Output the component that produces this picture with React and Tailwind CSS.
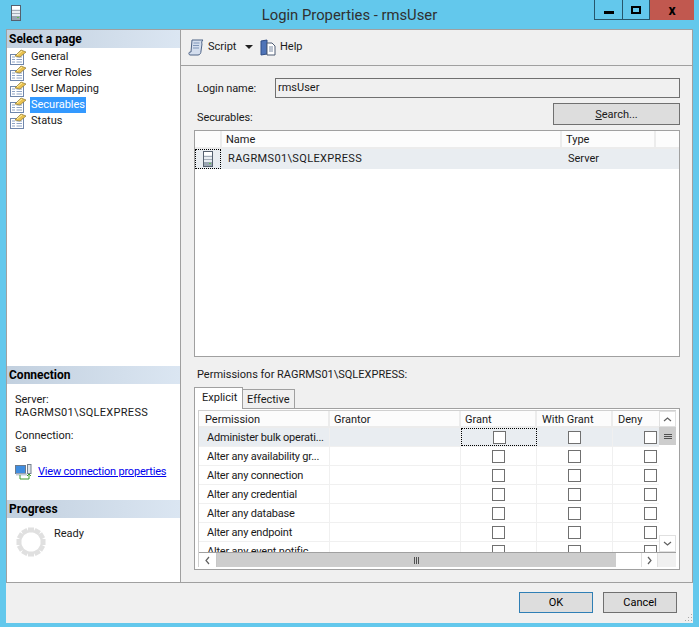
const PAGES = ["General", "Server Roles", "User Mapping", "Securables", "Status"];
const PERMISSIONS = [
  "Administer bulk operati...",
  "Alter any availability gr...",
  "Alter any connection",
  "Alter any credential",
  "Alter any database",
  "Alter any endpoint",
  "Alter any event notific...",
];

function PageIcon() {
  return (
    <svg width="17" height="16" viewBox="0 0 17 16" className="shrink-0">
      <rect x="0.5" y="5.5" width="13" height="10" fill="#fff" stroke="#6f86ab" />
      <path d="M2 8h3M2 10.5h3M2 13h3M6.5 8h5.5M6.5 10.5h5.5M6.5 13h5.5" stroke="#8ea3c4" />
      <path d="M5 7 L11 1 L16 3 L10 8 Z" fill="#e9c14f" stroke="#8f7a35" strokeWidth="0.7" />
      <path d="M7 6 L12 2" stroke="#fff1ad" />
    </svg>
  );
}

function ServerIcon({ className }) {
  return (
    <svg width="10" height="16" viewBox="0 0 10 16" className={className}>
      <rect x="0.5" y="0.5" width="9" height="15" fill="#e8edf2" stroke="#55606e" />
      <rect x="1" y="1" width="8" height="3" fill="#fff" />
      <path d="M1 5.5h8M1 8.5h8" stroke="#a4adb8" />
      <rect x="1" y="11" width="8" height="4" fill="#9aa6b2" />
      <rect x="6" y="12" width="2" height="1" fill="#5fc04f" />
    </svg>
  );
}

function ScriptIcon() {
  return (
    <svg width="17" height="17" viewBox="0 0 17 17" className="shrink-0">
      <path d="M4 1h11c-1.5 1-1.5 3-1 4l-1 7c0 2-1 4-3 4H2c-1.5 0-1.5-3 0-3h1z" fill="#d4deee" stroke="#4f6487" />
      <path d="M5.5 4h6M5 6.5h6M5 9h6" stroke="#7f95b8" />
    </svg>
  );
}

function HelpIcon() {
  return (
    <svg width="17" height="17" viewBox="0 0 17 17" className="shrink-0">
      <path d="M1 2 L7 1 L7 15 L1 16 Z" fill="#4f74b8" stroke="#2f4d86" />
      <path d="M7 4h5l3 3v9H7z" fill="#fff" stroke="#4d5b73" />
      <path d="M9 8h4M9 10h4M9 12h4" stroke="#7a8aa3" />
    </svg>
  );
}

function ConnectionIcon() {
  return (
    <svg width="17" height="16" viewBox="0 0 17 16" className="shrink-0">
      <rect x="0.5" y="1.5" width="10" height="8" fill="#3f8de0" stroke="#6c7a8c" />
      <rect x="1" y="9.5" width="11" height="2" fill="#c3ccd6" />
      <rect x="12.5" y="0.5" width="3.5" height="9" fill="#dfe5ea" stroke="#77828f" />
      <path d="M5 11v4h9v-4" fill="none" stroke="#3a9a2c" />
      <path d="M12 12l2-2 2 2" fill="none" stroke="#3a9a2c" />
    </svg>
  );
}

function Spinner() {
  const dots = Array.from({ length: 12 }, (_, i) => i * 30);
  return (
    <svg width="30" height="30" viewBox="0 0 30 30" className="shrink-0">
      {dots.map((a) => (
        <rect key={a} x="12" y="0.5" width="6" height="5" fill="#e0e0e0" transform={`rotate(${a} 15 15)`} />
      ))}
    </svg>
  );
}

function Chevron({ d }) {
  return (
    <svg width="9" height="9" viewBox="0 0 9 9">
      <path d={d} fill="none" stroke="#606060" strokeWidth="1.2" />
    </svg>
  );
}

function SectionHeader({ children }) {
  return (
    <div className="h-[18px] shrink-0 pl-[2px] flex items-center font-bold text-[12px] text-black bg-gradient-to-r from-[#c2d0df] to-[#dbe6f2]">
      {children}
    </div>
  );
}

function Checkbox() {
  return <span className="block w-[13px] h-[13px] bg-white border border-[#707070]" />;
}

function PermissionRow({ name, first }) {
  return (
    <div className={`h-[19px] shrink-0 flex border-b border-[#f0f0f0] ${first ? "bg-[#e9edf1]" : "bg-white"}`}>
      <div className="w-[131px] pl-[8px] pt-[2px] border-r border-[#f0f0f0] flex items-center whitespace-nowrap tracking-[-0.2px]">{name}</div>
      <div className="w-[131px] border-r border-[#f0f0f0]" />
      <div className={`w-[76px] pt-[1px] flex justify-center items-center ${first ? "outline-1 outline-dotted outline-black -outline-offset-1" : "border-r border-[#f0f0f0]"}`}>
        <Checkbox />
      </div>
      <div className="w-[76px] pt-[1px] flex justify-center items-center border-r border-[#f0f0f0]">
        <Checkbox />
      </div>
      <div className="flex-1 pt-[1px] flex justify-end items-center pr-[2px]">
        <Checkbox />
      </div>
    </div>
  );
}

export default function App() {
  return (
    <div className="w-[699px] h-[627px] flex flex-col bg-[#63c8ec] text-[11px] leading-[14px] text-[#1a1a1a] overflow-hidden font-['Roboto',sans-serif]">
      {/* title bar */}
      <div className="h-[29px] shrink-0 flex relative">
        <div className="w-[30px] pl-[11px] pt-[5px]">
          <ServerIcon className="w-[10px] h-[16px]" />
        </div>
        <div className="flex-1 text-center pt-[6px] pr-[30px] text-[14.8px] leading-[18px] text-[#303030]">Login Properties - rmsUser</div>
        <div className="absolute top-0 right-[5px] h-[20px] w-[100px] flex border border-t-0 border-[#26566b]">
          <div className="w-[28px] flex items-end justify-center pb-[5px] border-r border-[#26566b]">
            <span className="block w-[10px] h-[3px] bg-black" />
          </div>
          <div className="w-[26px] flex items-center justify-center">
            <span className="block w-[10px] h-[8px] border-2 border-black" />
          </div>
          <div className="flex-1 -my-px -mr-px bg-[#c1584f] border-l border-[#26566b] flex items-center justify-center font-bold text-[14px] text-black">x</div>
        </div>
      </div>

      {/* body */}
      <div className="flex-1 mx-[6px] mb-[4px] bg-[#f0f0f0] flex flex-col min-h-0">
        <div className="h-[554px] shrink-0 flex border-t border-b border-[#a0a0a0]">
          {/* left panel */}
          <div className="w-[175px] shrink-0 bg-white border-l border-r border-[#a0a0a0] flex flex-col">
            <SectionHeader>Select a page</SectionHeader>
            <div className="pl-[3px] pt-[1px]">
              {PAGES.map((page) => (
                <div key={page} className="h-[16px] flex items-center gap-[3px]">
                  <PageIcon />
                  <span className={`px-[1px] h-[16px] leading-[16px] ${page === "Securables" ? "bg-[#3399ff] text-white" : ""}`}>{page}</span>
                </div>
              ))}
            </div>
            <div className="flex-1" />
            <SectionHeader>Connection</SectionHeader>
            <div className="h-[116px] shrink-0 pl-[8px] pt-[9px]">
              <div className="leading-[13px]">Server:</div>
              <div className="leading-[13px] tracking-[0.3px]">RAGRMS01\SQLEXPRESS</div>
              <div className="leading-[13px] mt-[10px]">Connection:</div>
              <div className="leading-[13px]">sa</div>
              <div className="flex items-center gap-[6px] mt-[9px]">
                <ConnectionIcon />
                <span className="text-[#0000ee] underline whitespace-nowrap tracking-[-0.2px]">View connection properties</span>
              </div>
            </div>
            <SectionHeader>Progress</SectionHeader>
            <div className="flex pl-[9px] pt-[9px] gap-[8px] h-[64px] shrink-0">
              <Spinner />
              <span>Ready</span>
            </div>
          </div>

          {/* right panel */}
          <div className="flex-1 min-w-0 flex flex-col border-r border-[#a0a0a0]">
            <div className="h-[36px] shrink-0 flex items-center pl-[7px] pb-[1px] border-b border-[#a0a0a0]">
              <ScriptIcon />
              <span className="ml-[3px] w-[37px]">Script</span>
              <span className="w-0 h-0 border-x-[4px] border-x-transparent border-t-[4px] border-t-[#202020]" />
              <span className="ml-[7px]"><HelpIcon /></span>
              <span className="ml-[3px]">Help</span>
            </div>

            <div className="flex-1 min-h-0 pl-[13px] pr-[12px] flex flex-col">
              <div className="flex items-center mt-[12px] h-[20px]">
                <span className="w-[81px] pl-[3px] pt-[1px] tracking-[-0.1px]">Login name:</span>
                <div className="flex-1 h-[20px] border border-[#707070] bg-[#f0f0f0] pl-[2px] leading-[18px]">rmsUser</div>
              </div>
              <div className="flex items-end justify-between h-[22px] mt-[5px]">
                <span className="pl-[3px] tracking-[-0.1px]">Securables:</span>
                <button className="w-[127px] h-[22px] pt-[1px] bg-[#dddddd] border border-[#707070] text-center">
                  <span className="underline">S</span>earch...
                </button>
              </div>

              {/* securables grid */}
              <div className="h-[227px] mt-[5px] bg-white border border-[#a0a0a0] shrink-0">
                <div className="h-[18px] flex bg-[#fcfcfc] border-b-2 border-[#ececec]">
                  <div className="w-[27px] border-r-2 border-[#ececec]" />
                  <div className="w-[340px] pl-[4px] border-r-2 border-[#ececec] leading-[18px]">Name</div>
                  <div className="w-[94px] pl-[4px] border-r-2 border-[#ececec] leading-[18px]">Type</div>
                </div>
                <div className="h-[20px] flex bg-[#e9edf1]">
                  <div className="w-[26px] flex items-center justify-center outline-1 outline-dotted outline-black -outline-offset-1">
                    <ServerIcon className="w-[10px] h-[16px]" />
                  </div>
                  <div className="w-[341px] pl-[7px] flex items-center tracking-[0.35px]">RAGRMS01\SQLEXPRESS</div>
                  <div className="pl-[6px] flex items-center">Server</div>
                </div>
              </div>

              <div className="mt-[10px] h-[14px] pt-[1px] shrink-0 pl-[3px]">Permissions for RAGRMS01\SQLEXPRESS:</div>

              {/* tabs */}
              <div className="flex items-end h-[21px] mt-[6px] shrink-0">
                <div className="w-[49px] h-[22px] bg-white border border-b-0 border-[#a0a0a0] pl-[7px] pt-[3px] relative top-px z-10">Explicit</div>
                <div className="w-[52px] h-[19px] border border-b-0 border-l-0 border-[#a0a0a0] bg-[#f0f0f0] pl-[4px] pt-[3px]">Effective</div>
              </div>
              <div className="h-[162px] border border-[#a0a0a0] bg-white pt-[1px] pl-[3px] pr-[3px] pb-[2px] shrink-0">
                <div className="h-[157px] flex flex-col border-l border-t border-[#d0d0d0]">
                  <div className="h-[141px] shrink-0 flex">
                    <div className="w-[460px] shrink-0 flex flex-col overflow-hidden">
                      <div className="h-[17px] shrink-0 flex bg-[#fcfcfc] border-b-2 border-[#ececec]">
                        <div className="w-[131px] pl-[6px] border-r-2 border-[#ececec] leading-[17px]">Permission</div>
                        <div className="w-[131px] pl-[4px] border-r-2 border-[#ececec] leading-[17px]">Grantor</div>
                        <div className="w-[76px] pl-[4px] border-r-2 border-[#ececec] leading-[17px]">Grant</div>
                        <div className="w-[76px] pl-[5px] border-r-2 border-[#ececec] leading-[17px]">With Grant</div>
                        <div className="flex-1 pl-[5px] leading-[17px]">Deny</div>
                      </div>
                      {PERMISSIONS.map((p, i) => (
                        <PermissionRow key={p} name={p} first={i === 0} />
                      ))}
                    </div>
                    {/* vertical scrollbar */}
                    <div className="flex-1 flex flex-col bg-white">
                      <div className="h-[16px] flex items-center justify-center border border-[#e0e0e0]">
                        <Chevron d="M1 6 L4.5 3 L8 6" />
                      </div>
                      <div className="h-[18px] bg-[#cdcdcd] flex flex-col items-center justify-center gap-[1px]">
                        <span className="block w-[8px] h-px bg-[#505050]" />
                        <span className="block w-[8px] h-px bg-[#505050]" />
                        <span className="block w-[8px] h-px bg-[#505050]" />
                      </div>
                      <div className="flex-1" />
                      <div className="h-[17px] flex items-center justify-center border border-[#e0e0e0]">
                        <Chevron d="M1 3 L4.5 6 L8 3" />
                      </div>
                    </div>
                  </div>
                  {/* horizontal scrollbar */}
                  <div className="h-[15px] shrink-0 flex bg-white border-t border-[#a0a0a0]">
                    <div className="w-[18px] flex items-center justify-center border-r border-[#c8c8c8]">
                      <Chevron d="M6 1 L3 4.5 L6 8" />
                    </div>
                    <div className="w-[399px] bg-[#cdcdcd] flex items-center justify-center gap-[1px]">
                      <span className="block w-px h-[7px] bg-[#505050]" />
                      <span className="block w-px h-[7px] bg-[#505050]" />
                      <span className="block w-px h-[7px] bg-[#505050]" />
                    </div>
                    <div className="flex-1" />
                    <div className="w-[17px] flex items-center justify-center border-x border-[#e0e0e0]">
                      <Chevron d="M3 1 L6 4.5 L3 8" />
                    </div>
                    <div className="w-[18px] bg-[#f0f0f0]" />
                  </div>
                </div>
              </div>
            </div>
          </div>
        </div>

        {/* footer */}
        <div className="flex-1 flex justify-end items-start gap-[10px] pt-[9px] pr-[16px] relative">
          <button className="w-[74px] h-[21px] bg-[#dddddd] border border-[#2f7fb5] text-center text-black">OK</button>
          <button className="w-[74px] h-[21px] bg-[#dddddd] border border-[#707070] text-center text-black">Cancel</button>
          <svg width="10" height="10" viewBox="0 0 10 10" className="absolute right-0 bottom-0">
            <path d="M8 1h1v1H8zM5 4h1v1H5zM8 4h1v1H8zM2 7h1v1H2zM5 7h1v1H5zM8 7h1v1H8z" fill="#a8a8a8" />
          </svg>
        </div>
      </div>
    </div>
  );
}
